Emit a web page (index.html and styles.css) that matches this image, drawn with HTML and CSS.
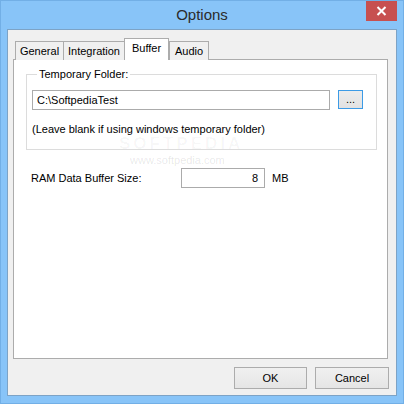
FILE: index.html
```html
<!DOCTYPE html>
<html>
<head>
<meta charset="utf-8">
<link rel="stylesheet" href="styles.css">
</head>
<body>
<div class="window">
  <div class="titlebar">
    <div class="title">Options</div>
    <div class="close">
      <svg width="11" height="10" viewBox="0 0 11 10"><path d="M1.5 1 L9.5 9 M9.5 1 L1.5 9" stroke="#fff" stroke-width="2"/></svg>
    </div>
  </div>
  <div class="client">
    <div class="tabs">
      <div class="tab t-general">General</div>
      <div class="tab t-integ">Integration</div>
      <div class="tab active">Buffer</div>
      <div class="tab t-audio">Audio</div>
    </div>
    <div class="panel">
      <fieldset class="group">
        <legend>Temporary Folder:</legend>
        <div class="row">
          <div class="textbox">C:\SoftpediaTest</div>
          <div class="browse">...</div>
        </div>
        <div class="hint">(Leave blank if using windows temporary folder)</div>
      </fieldset>
      <div class="ramrow">
        <div class="ramlabel">RAM Data Buffer Size:</div>
        <div class="numbox">8</div>
        <div class="unit">MB</div>
      </div>
      <div class="wm1">SOFTPEDIA</div>
      <div class="wm2">www.softpedia.com</div>
    </div>
    <div class="buttons">
      <div class="btn ok">OK</div>
      <div class="btn cancel">Cancel</div>
    </div>
  </div>
</div>
</body>
</html>
```
FILE: styles.css
```css
* { box-sizing: border-box; }
html, body { margin: 0; padding: 0; }
body { width: 404px; height: 404px; overflow: hidden; font-family: "Liberation Sans", Arial, sans-serif; font-size: 11px; color: #000; }
.window {
  width: 404px; height: 404px;
  background: #88c4f8;
  border: 1px solid #72afe6;
  display: flex; flex-direction: column;
}
.titlebar {
  height: 28px; flex: none;
  display: flex; align-items: center; justify-content: center;
  position: relative;
}
.title { font-size: 15px; color: #2b2b2b; margin-top: -1px; }
.close {
  position: absolute; right: 6px; top: 0;
  width: 31px; height: 20px;
  background: #c75050;
  display: flex; align-items: center; justify-content: center;
}
.client {
  margin: 0 6px 7px 6px;
  flex: 1;
  background: #f0f0f0;
  border: 1px solid #7da3c6;
  padding: 8px 8px 0 5px;
  display: flex; flex-direction: column;
}
.tabs {
  height: 21px;
  display: flex; align-items: flex-end;
  padding-left: 2px;
  position: relative; z-index: 1;
}
.tab {
  height: 19px;
  border: 1px solid #acacac; border-bottom: none;
  background: #f0f0f0;
  padding: 0 4px;
  display: flex; align-items: center; justify-content: center;
  margin-right: -1px;
  margin-bottom: -1px;
}
.t-general { width: 49px; }
.t-integ { width: 62px; }
.t-audio { width: 40px; }
.tab.active {
  height: 22px; width: 45px;
  background: #fff;
  padding-bottom: 3px;
  margin-right: 0;
}
.panel {
  height: 300px;
  background: #fff;
  border: 1px solid #acacac;
  padding: 8px 10px 0 12px;
  position: relative;
}
.group {
  margin: 0;
  border: 1px solid #dcdcdc;
  padding: 10px 5px 0 5px;
  height: 82px;
}
.group legend { padding: 0 2px; margin-left: 5px; }
.row { display: flex; align-items: flex-start; }
.textbox {
  width: 298px; height: 20px;
  border: 1px solid #ababab;
  padding: 0 4px;
  display: flex; align-items: center;
}
.browse {
  margin-left: 8px;
  width: 25px; height: 19px;
  border: 1px solid #3c9be6;
  background: linear-gradient(#ececec, #e2e2e2);
  display: flex; align-items: center; justify-content: center;
  padding-bottom: 2px;
}
.hint { margin-top: 13px; }
.ramrow {
  display: flex; align-items: center;
  margin-top: 18px; padding-left: 5px;
}
.ramlabel { width: 150px; }
.numbox {
  width: 84px; height: 20px;
  border: 1px solid #ababab;
  padding: 0 6px;
  display: flex; align-items: center; justify-content: flex-end;
}
.unit { margin-left: 7px; }
.wm1 {
  position: absolute; left: 105px; top: 77px;
  font-size: 17px; line-height: 13px; font-weight: bold; letter-spacing: 3px;
  color: rgba(0,0,0,0.035);
}
.wm2 {
  position: absolute; left: 116px; top: 95px;
  font-size: 11px; line-height: 11px;
  color: rgba(0,0,0,0.1);
}
.buttons {
  display: flex; justify-content: flex-end;
  gap: 8px;
  margin-top: 8px;
  margin-right: -1px;
}
.btn {
  height: 22px;
  border: 1px solid #acacac;
  background: linear-gradient(#f0f0f0, #e5e5e5);
  display: flex; align-items: center; justify-content: center;
}
.ok { width: 73px; }
.cancel { width: 74px; }
```
